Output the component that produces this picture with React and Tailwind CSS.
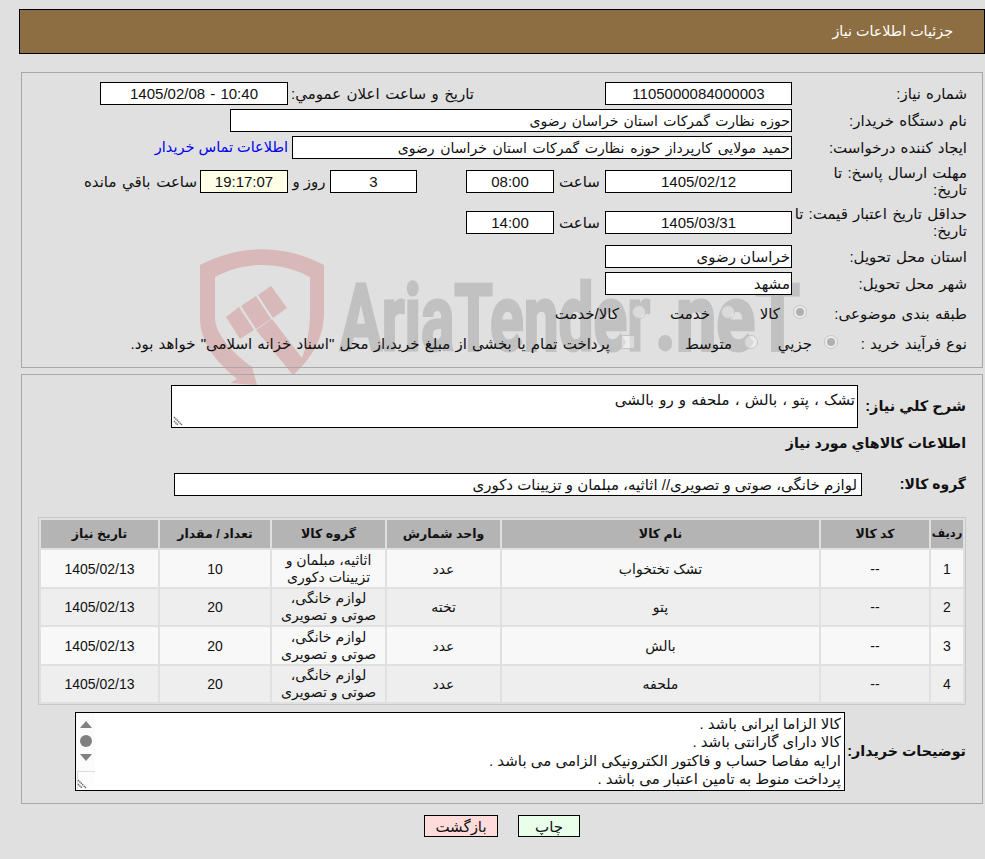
const FONT = "font-['Liberation_Sans','DejaVu_Sans',sans-serif]";

const rows = [
  { id: 1, name: "تشک تختخواب", unit: "عدد", group: "اثاثیه، مبلمان و تزیینات دکوری", qty: 10 },
  { id: 2, name: "پتو", unit: "تخته", group: "لوازم خانگی، صوتی و تصویری", qty: 20 },
  { id: 3, name: "بالش", unit: "عدد", group: "لوازم خانگی، صوتی و تصویری", qty: 20 },
  { id: 4, name: "ملحفه", unit: "عدد", group: "لوازم خانگی، صوتی و تصویری", qty: 20 },
];

function Box({ className = "", children }) {
  return (
    <div className={`h-[23px] bg-white border border-black flex items-center justify-center text-[15px] leading-none overflow-hidden ${className}`}>
      {children}
    </div>
  );
}

function Row({ label, className = "", children }) {
  return (
    <div className={`flex items-center ${className}`}>
      <div className="w-[175px] shrink-0 text-[15px] leading-[17px] whitespace-nowrap [word-spacing:1px]">{label}</div>
      {children}
    </div>
  );
}

function Radio({ on, label, className = "", gap = "gap-[13px]" }) {
  return (
    <span className={`flex items-center ${gap} ${className}`}>
      <span className="w-[14px] h-[14px] -mt-[4px] rounded-full border border-[#c4c4c4] bg-white/40 flex items-center justify-center">
        {on && <span className="w-[8px] h-[8px] rounded-full bg-[#b0b0b0]" />}
      </span>
      <span className="text-[15px] leading-none">{label}</span>
    </span>
  );
}

function Grip() {
  return (
    <svg className="absolute left-[1px] bottom-[1px]" width="10" height="10" viewBox="0 0 10 10">
      <path d="M1 1l8 8M1 5l4 4" stroke="#666" strokeWidth="1.4" strokeDasharray="1.4 .6" fill="none" />
    </svg>
  );
}

function Watermark() {
  return (
    <svg dir="ltr" className="absolute left-0 top-0" width="985" height="400" viewBox="0 0 985 400">
      <g fill="#d8b8b8">
        <path d="M200 265C240 244 284 244 324 265V312C324 340 310 360 293 375L256 330L272 319L302 358C307 345 310 330 310 312V277C280 261 244 261 215 277V318C215 335 235 355 252 367L257 385L230 383L237 379C220 365 200 345 200 318Z" />
        <path d="M226 317L239 307L254 330L240 339Z" />
        <path d="M241 306L256 296L271 319L256 329Z" />
        <path d="M258 295L271 286L287 308L273 318Z" />
      </g>
      <g direction="ltr" fill="#c1c1c1" stroke="#c1c1c1" strokeWidth="3" fontFamily="Roboto, sans-serif" fontWeight="700" fontSize="92">
        <text x="340" y="350" textLength="310" lengthAdjust="spacingAndGlyphs">AriaTender</text>
        <text x="655" y="350" textLength="145" lengthAdjust="spacingAndGlyphs">.neT</text>
      </g>
    </svg>
  );
}

export default function App() {
  return (
    <div dir="rtl" className={`${FONT} relative w-[985px] h-[859px] bg-[#e0e0e0] text-[#111] overflow-hidden`}>
      <Watermark />
      <div className="relative pt-[9px] pl-[19px]">
        <div className="h-[45px] bg-[#8d6e42] border border-black text-white text-[14.3px] flex items-center pr-[31px]">
          جزئیات اطلاعات نیاز
        </div>

        <div className="mt-[18px] mx-[2px] h-[296px] border border-[#a8a8a8] pt-[9px] pr-[15px]">
          <Row label="شماره نیاز:" className="mb-[4px]">
            <Box className="w-[187px]">1105000084000003</Box>
            <span className="w-[131px]" />
            <span className="w-[186px] text-[15px] leading-[23px] whitespace-nowrap [word-spacing:1.3px]">تاریخ و ساعت اعلان عمومي:</span>
            <Box className="w-[188px] [word-spacing:1px]"><span dir="ltr">1405/02/08 - 10:40</span></Box>
          </Row>
          <Row label="نام دستگاه خریدار:" className="mb-[4px]">
            <Box className="w-[562px] justify-start pr-[1px] !text-[14px] [word-spacing:1.4px]">حوزه نظارت گمرکات استان خراسان رضوی</Box>
          </Row>
          <Row label="ایجاد کننده درخواست:" className="mb-[5px]">
            <Box className="w-[500px] justify-start pr-[1px] !text-[14px] [word-spacing:1.8px]">حمید مولایی کارپرداز حوزه نظارت گمرکات استان خراسان رضوی</Box>
            <a className="mr-[4px] text-[14.5px] leading-[23px] text-[#0000ee]">اطلاعات تماس خریدار</a>
          </Row>
          <Row label={<>مهلت ارسال پاسخ: تا<br />تاریخ:</>} className="mb-[7px]">
            <Box className="w-[187px]">1405/02/12</Box>
            <span className="w-[51px] text-center text-[15px] leading-[23px]">ساعت</span>
            <Box className="w-[88px]">08:00</Box>
            <span className="w-[49px]" />
            <Box className="w-[87px]">3</Box>
            <span className="w-[42px] text-center text-[15px] leading-[23px]">روز و</span>
            <Box className="w-[88px] !bg-[#ffffe8]">19:17:07</Box>
            <span className="mr-[3px] text-[15px] leading-[23px] [word-spacing:1.5px]">ساعت باقي مانده</span>
          </Row>
          <Row label={<>حداقل تاریخ اعتبار قیمت: تا<br />تاریخ:</>} className="mb-[6px]">
            <Box className="w-[187px]">1405/03/31</Box>
            <span className="w-[51px] text-center text-[15px] leading-[23px]">ساعت</span>
            <Box className="w-[88px]">14:00</Box>
          </Row>
          <Row label="استان محل تحویل:" className="mb-[4px]">
            <Box className="w-[187px] justify-start pr-[1px]">خراسان رضوی</Box>
          </Row>
          <Row label="شهر محل تحویل:" className="mb-[10px]">
            <Box className="w-[187px] justify-start pr-[1px]">مشهد</Box>
          </Row>
          <Row label="طبقه بندی موضوعی:" className="mb-[13px]">
            <Radio on label="کالا" className="-mr-[15px] w-[72px]" />
            <Radio label="خدمت" gap="gap-[11px]" className="w-[89px]" />
            <Radio label="کالا/خدمت" />
          </Row>
          <Row label="نوع فرآیند خرید :">
            <Radio on label="جزیي" gap="gap-[12px]" className="-mr-[46px] w-[80px]" />
            <Radio label="متوسط" gap="gap-[12px]" className="w-[123px]" />
            <span className="flex items-center gap-[11px]">
              <span className="w-[14px] h-[14px] -mt-[4px] rounded-[2px] border border-[#c4c4c4] bg-white/40" />
              <span className="text-[15px] leading-none whitespace-nowrap [word-spacing:1px]">پرداخت تمام یا بخشی از مبلغ خرید،از محل "اسناد خزانه اسلامی" خواهد بود.</span>
            </span>
          </Row>
        </div>

        <div className="mt-[6px] mx-[2px] h-[430px] border border-[#a8a8a8] pr-[16px]">
          <div className="flex mt-[10px]">
            <div className="w-[108px] text-[14.5px] font-bold leading-[42px]">شرح کلي نیاز:</div>
            <div className="relative w-[687px] h-[43px] bg-white border border-black text-[15px] pr-[2px] pt-[3px] [word-spacing:1px]">
              تشک ، پتو ، بالش ، ملحفه و رو بالشی
              <Grip />
            </div>
          </div>
          <div className="mt-[7px] text-[14.2px] font-bold leading-[17px]">اطلاعات کالاهاي مورد نیاز</div>
          <div className="flex mt-[21px]">
            <div className="w-[104px] text-[14px] font-bold leading-[23px]">گروه کالا:</div>
            <Box className="w-[688px] justify-start pr-[4px]">لوازم خانگی، صوتی و تصویری// اثاثیه، مبلمان و تزیینات دکوری</Box>
          </div>
          <table className="mt-[21px] w-[928px] table-fixed border-separate border-spacing-[2px] border border-[#c8c8c8] text-[14px] text-center">
            <thead>
              <tr className="bg-[#b4b4b4] h-[28px] font-bold text-[12.5px]">
                <th className="w-[32px] text-[11.5px]">ردیف</th>
                <th className="w-[108px]">کد کالا</th>
                <th className="w-[317px]">نام کالا</th>
                <th className="w-[113px]">واحد شمارش</th>
                <th className="w-[113px]">گروه کالا</th>
                <th className="w-[110px]">تعداد / مقدار</th>
                <th className="w-[117px]">تاریخ نیاز</th>
              </tr>
            </thead>
            <tbody>
              {rows.map((r, i) => (
                <tr key={r.id} className={`h-[36.5px] leading-[17px] ${i % 2 === 0 ? "bg-[#f8f8f8]" : "bg-[#eeeeee]"}`}>
                  <td className="pt-[2px]">{r.id}</td>
                  <td className="pt-[2px]">--</td>
                  <td className="pt-[2px]">{r.name}</td>
                  <td className="pt-[2px]">{r.unit}</td>
                  <td className="pt-[1px]">{r.group}</td>
                  <td className="pt-[2px]">{r.qty}</td>
                  <td className="pt-[2px]">1405/02/13</td>
                </tr>
              ))}
            </tbody>
          </table>
          <div className="flex mt-[7px]">
            <div className="w-[121px] text-[14.3px] font-bold leading-[78px]">توضیحات خریدار:</div>
            <div className="relative w-[770px] h-[79px] bg-white border border-black text-[15px] leading-[18.3px] pr-[3px] pt-[2px]">
              <p>کالا الزاما ایرانی باشد .</p>
              <p>کالا دارای گارانتی باشد .</p>
              <p>ارایه مفاصا حساب و فاکتور الکترونیکی الزامی می باشد .</p>
              <p>پرداخت منوط به تامین اعتبار می باشد .</p>
              <div className="absolute left-0 top-0 w-[19px] h-full bg-[#fbfbfb] flex flex-col items-center pt-[8px]">
                <span className="w-0 h-0 border-x-[6px] border-x-transparent border-b-[7px] border-b-[#808080]" />
                <span className="w-[12px] h-[12px] rounded-full bg-[#808080] mt-[7px]" />
                <span className="w-0 h-0 border-x-[6px] border-x-transparent border-t-[7px] border-t-[#808080] mt-[7px]" />
              </div>
              <div className="absolute left-[1px] bottom-0 w-[18px] h-[19px] border-l border-t border-[#dcdcdc] bg-[#fdfdfd]" />
              <Grip />
            </div>
          </div>
        </div>

        <div className="flex justify-center gap-[20px] mt-[11px]">
          <button className="w-[62px] h-[22px] bg-[#eaffea] border border-black text-[15px] leading-none">چاپ</button>
          <button className="w-[74px] h-[22px] bg-[#ffdcdc] border border-black text-[15px] leading-none">بازگشت</button>
        </div>
      </div>
    </div>
  );
}
